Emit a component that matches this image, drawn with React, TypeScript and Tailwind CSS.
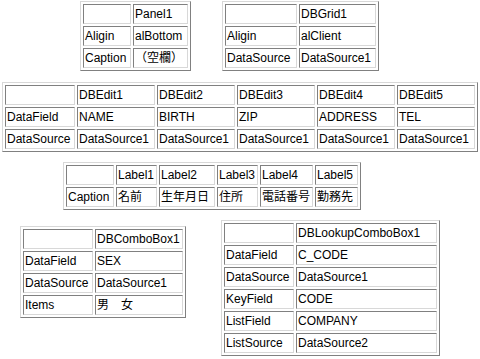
type Props = {
  widths: string[];
  rows: string[][];
};

// old-style border=1 table: outset frame, inset cells, 2px cell spacing
function PropTable({ widths, rows }: Props) {
  return (
    <table className="border-separate border-spacing-[2px] border border-t-[#d8d8d8] border-l-[#d8d8d8] border-r-[#808080] border-b-[#808080]">
      <tbody>
        {rows.map((row, r) => (
          <tr key={r}>
            {row.map((cell, c) => (
              <td
                key={c}
                className={[
                  'h-[20px] p-[1px] leading-4 text-[12px] text-black whitespace-nowrap align-middle text-left',
                  'border border-t-[#808080] border-l-[#808080] border-r-[#d8d8d8] border-b-[#d8d8d8]',
                  r === 0 ? widths[c] : '',
                ].join(' ')}
              >
                {cell}
              </td>
            ))}
          </tr>
        ))}
      </tbody>
    </table>
  );
}

export default function App() {
  return (
    <div
      className="w-[480px] h-[359px] overflow-hidden bg-white flex flex-col"
      style={{ fontFamily: '"Liberation Sans", "Noto Sans CJK JP", sans-serif' }}
    >
      <div className="flex items-start pt-[1px] pl-[80px] gap-[31px]">
        <PropTable
          widths={['w-[48px]', 'w-[55px]']}
          rows={[
            ['', 'Panel1'],
            ['Aligin', 'alBottom'],
            ['Caption', '（空欄）'],
          ]}
        />
        <PropTable
          widths={['w-[72px]', 'w-[77px]']}
          rows={[
            ['', 'DBGrid1'],
            ['Aligin', 'alClient'],
            ['DataSource', 'DataSource1'],
          ]}
        />
      </div>

      <div className="flex mt-[11px] pl-[2px]">
        <PropTable
          widths={['w-[70px]', 'w-[78px]', 'w-[78px]', 'w-[78px]', 'w-[78px]', 'w-[78px]']}
          rows={[
            ['', 'DBEdit1', 'DBEdit2', 'DBEdit3', 'DBEdit4', 'DBEdit5'],
            ['DataField', 'NAME', 'BIRTH', 'ZIP', 'ADDRESS', 'TEL'],
            ['DataSource', 'DataSource1', 'DataSource1', 'DataSource1', 'DataSource1', 'DataSource1'],
          ]}
        />
      </div>

      <div className="flex mt-[10px] pl-[63px]">
        <PropTable
          widths={['w-[48px]', 'w-[41px]', 'w-[56px]', 'w-[41px]', 'w-[53px]', 'w-[43px]']}
          rows={[
            ['', 'Label1', 'Label2', 'Label3', 'Label4', 'Label5'],
            ['Caption', '名前', '生年月日', '住所', '電話番号', '勤務先'],
          ]}
        />
      </div>

      <div className="flex items-start mt-[10px] pl-[20px] gap-[35px]">
        <div className="mt-[6px]">
          <PropTable
            widths={['w-[70px]', 'w-[88px]']}
            rows={[
              ['', 'DBComboBox1'],
              ['DataField', 'SEX'],
              ['DataSource', 'DataSource1'],
              ['Items', '男　女'],
            ]}
          />
        </div>
        <PropTable
          widths={['w-[70px]', 'w-[141px]']}
          rows={[
            ['', 'DBLookupComboBox1'],
            ['DataField', 'C_CODE'],
            ['DataSource', 'DataSource1'],
            ['KeyField', 'CODE'],
            ['ListField', 'COMPANY'],
            ['ListSource', 'DataSource2'],
          ]}
        />
      </div>
    </div>
  );
}
